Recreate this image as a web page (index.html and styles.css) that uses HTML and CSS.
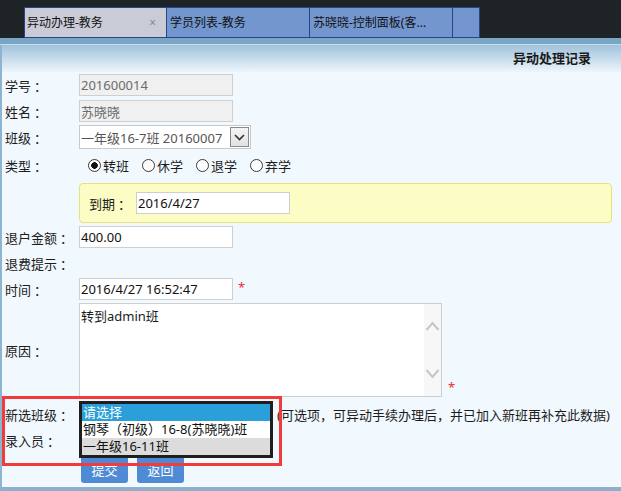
FILE: index.html
```html
<!DOCTYPE html>
<html lang="zh-CN">
<head>
<meta charset="utf-8">
<title>异动处理记录</title>
<link rel="stylesheet" href="styles.css">
</head>
<body>
<div class="topbar">
  <div class="tabs">
    <div class="tab tab-active"><span>异动办理-教务</span><span class="close">×</span></div>
    <div class="tab">学员列表-教务</div>
    <div class="tab">苏晓晓-控制面板(客...</div>
    <div class="tab tab-empty"></div>
  </div>
</div>
<div class="strip"></div>
<div class="panel">
  <div class="header"><h1>异动处理记录</h1></div>
  <form class="form">
    <div class="row r-input r1">
      <span class="label">学号<span class="c">：</span></span>
      <input class="field disabled" type="text" value="201600014" disabled>
    </div>
    <div class="row r-input r2">
      <span class="label">姓名<span class="c">：</span></span>
      <input class="field disabled" type="text" value="苏晓晓" disabled>
    </div>
    <div class="row r3">
      <span class="label">班级<span class="c">：</span></span>
      <div class="select">
        <span class="select-text">一年级16-7班 20160007</span>
        <span class="select-arrow"><svg width="11" height="7" viewBox="0 0 11 7"><polyline points="1,1 5.5,5.5 10,1" fill="none" stroke="#333" stroke-width="1.6"/></svg></span>
      </div>
    </div>
    <div class="row r4">
      <span class="label">类型<span class="c">：</span></span>
      <div class="radios">
        <label class="radio-item"><input class="radio" type="radio" name="t" checked>转班</label>
        <label class="radio-item"><input class="radio" type="radio" name="t">休学</label>
        <label class="radio-item"><input class="radio" type="radio" name="t">退学</label>
        <label class="radio-item"><input class="radio" type="radio" name="t">弃学</label>
      </div>
    </div>
    <div class="notice">
      <div class="row notice-row">
        <span class="notice-label">到期<span class="c">：</span></span>
        <input class="field" type="text" value="2016/4/27">
      </div>
    </div>
    <div class="row r-input r5">
      <span class="label">退户金额<span class="c">：</span></span>
      <input class="field" type="text" value="400.00">
    </div>
    <div class="row r6">
      <span class="label">退费提示<span class="c">：</span></span>
    </div>
    <div class="row r-input r7">
      <span class="label">时间<span class="c">：</span></span>
      <input class="field" type="text" value="2016/4/27 16:52:47">
      <span class="star">*</span>
    </div>
    <div class="row r8">
      <span class="label">原因<span class="c">：</span></span>
      <div class="textarea">
        <div class="textarea-text">转到admin班</div>
        <div class="scrollbar">
          <svg width="17" height="92" viewBox="0 0 17 92">
            <polyline points="2.5,26 8.5,19 14.5,26" fill="none" stroke="#c6c6c6" stroke-width="2"/>
            <polyline points="2.5,66 8.5,73 14.5,66" fill="none" stroke="#c6c6c6" stroke-width="2"/>
          </svg>
        </div>
      </div>
      <span class="star star-bottom">*</span>
    </div>
    <div class="row r9">
      <span class="label">新选班级<span class="c">：</span></span>
      <div class="listwrap">
        <div class="listbox">
          <div class="opt opt-selected">请选择</div>
          <div class="opt">钢琴（初级）16-8(苏晓晓)班</div>
          <div class="opt opt-hover">一年级16-11班</div>
        </div>
      </div>
      <span class="note">(可选项，可异动手续办理后，并已加入新班再补充此数据)</span>
    </div>
    <div class="row r10">
      <span class="label">录入员<span class="c">：</span></span>
    </div>
    <div class="buttons">
      <button class="btn" type="button">提交</button>
      <button class="btn" type="button">返回</button>
    </div>
    <div class="annot"></div>
  </form>
</div>
</body>
</html>
```
FILE: styles.css
```css
html, body {
  margin: 0;
  padding: 0;
}
body {
  width: 621px;
  height: 491px;
  overflow: hidden;
  font-family: "Noto Sans", "Noto Sans CJK SC", sans-serif;
  font-size: 13px;
  color: #1c1c1c;
  background: #f1f8fe;
}
.c {
  margin-left: 3px;
}
.topbar {
  height: 38px;
  box-sizing: border-box;
  padding: 7px 0 0 24px;
  background: #1e2326;
}
.tabs {
  display: flex;
  height: 31px;
}
.tab {
  width: 143px;
  box-sizing: border-box;
  border: 1px solid #2b438a;
  border-left: none;
  background: #7396cf;
  color: #111;
  font-size: 12px;
  line-height: 29px;
  padding-left: 3px;
  white-space: nowrap;
  overflow: hidden;
}
.tab-active {
  border-left: 1px solid #2b438a;
  background: #c9ccd7;
  padding-left: 2px;
  padding-right: 10px;
  display: flex;
  justify-content: space-between;
}
.close {
  color: #8a8a8a;
  font-size: 12px;
}
.tab-empty {
  width: 27px;
}
.strip {
  height: 6px;
  background: #78a6c4;
  border-bottom: 1px solid #c6dcec;
}
.panel {
  height: 446px;
  box-sizing: border-box;
  border-left: 2px solid #8db4d0;
  border-bottom: 4px solid #8fb0ca;
  display: flex;
  flex-direction: column;
}
.header {
  height: 27px;
  flex: none;
  background: linear-gradient(#a0c2dc, #edf5fb);
}
.header h1 {
  margin: 0;
  font-size: 13px;
  font-weight: bold;
  line-height: 27px;
  text-align: right;
  padding-right: 30px;
  color: #1a1a1a;
}
.form {
  position: relative;
  flex: 1;
  margin: 0;
  padding: 2px 0 0 3px;
}
.row {
  display: flex;
  align-items: center;
}
.label {
  width: 74px;
  flex: none;
  white-space: nowrap;
}
.r-input { height: 22px; }
.r1 { margin-bottom: 4px; }
.r2 { margin-bottom: 3px; }
.r3 { height: 24px; }
.r4 { height: 32px; }
.r5 { margin-top: 3px; }
.r6 { height: 30px; }
.r8 { margin-top: 3px; height: 94px; }
.r9 { height: 34px; }
.r10 { height: 18px; }

.field {
  width: 154px;
  height: 22px;
  box-sizing: border-box;
  margin: 0;
  border: 1px solid #cfcfcf;
  padding: 0 1px;
  font-family: inherit;
  font-size: 13px;
  color: #111;
  background: #fff;
  outline: none;
}
.field.disabled {
  background: #f0f0f0;
  color: #6b6b6b;
}
.select {
  width: 172px;
  height: 24px;
  box-sizing: border-box;
  border: 1px solid #c9c9c9;
  background: #fff;
  display: flex;
  align-items: center;
  padding-left: 1px;
}
.select-text {
  white-space: nowrap;
  overflow: hidden;
  color: #555;
}
.select-arrow {
  margin-left: auto;
  margin-right: 1px;
  flex: none;
  width: 19px;
  height: 20px;
  box-sizing: border-box;
  border: 1px solid #8a8a8a;
  background: linear-gradient(#f4f4f4, #e2e2e2);
  display: flex;
  align-items: center;
  justify-content: center;
}
.radios {
  display: flex;
  align-items: center;
  padding-left: 9px;
}
.radio-item {
  display: flex;
  align-items: center;
  margin-right: 13px;
}
.radio {
  appearance: none;
  -webkit-appearance: none;
  width: 13px;
  height: 13px;
  box-sizing: border-box;
  margin: 0 2px 0 0;
  border: 1px solid #3a3a3a;
  border-radius: 50%;
  background: #fff;
}
.radio:checked {
  background: radial-gradient(circle, #111 0, #111 3px, #fff 3.6px);
}
.notice {
  margin: 2px 0 0 74px;
  width: 533px;
  height: 40px;
  box-sizing: border-box;
  border: 1px solid #e6e27c;
  border-radius: 4px;
  background: #fcfdc4;
  padding: 8px 0 0 9px;
}
.notice-row {
  height: 22px;
}
.notice-label {
  width: 47px;
  flex: none;
  white-space: nowrap;
}
.star {
  color: #e83030;
  margin-left: 5px;
  align-self: flex-start;
  line-height: 18px;
}
.star-bottom {
  align-self: flex-end;
  margin-left: 6px;
  margin-bottom: 1px;
}
.textarea {
  width: 363px;
  height: 94px;
  box-sizing: border-box;
  border: 1px solid #cfcfcf;
  background: #fff;
  display: flex;
}
.textarea-text {
  flex: 1;
  padding: 2px 2px 0 1px;
  line-height: 20px;
}
.scrollbar {
  width: 17px;
  background: #f7f7f7;
}
.scrollbar svg {
  display: block;
}
.listwrap {
  position: relative;
  width: 194px;
  height: 22px;
  flex: none;
}
.listbox {
  position: absolute;
  left: 0;
  top: -2px;
  width: 194px;
  box-sizing: border-box;
  border: 3px solid #1f1f1f;
  background: #fff;
  z-index: 2;
}
.opt {
  height: 17px;
  line-height: 17px;
  padding-left: 1px;
  white-space: nowrap;
  overflow: hidden;
  color: #111;
}
.opt-selected {
  background: #2a9fd9;
  color: #fff;
}
.opt-hover {
  background: #dcdcdc;
}
.note {
  margin-left: 4px;
  white-space: nowrap;
  color: #1c1c1c;
}
.buttons {
  display: flex;
  gap: 9px;
  margin: 6px 0 0 76px;
}
.btn {
  width: 47px;
  height: 28px;
  border: none;
  border-radius: 3px;
  background: #4f8bd4;
  color: #fff;
  font-family: inherit;
  font-size: 13px;
  padding: 0;
}
.annot {
  position: absolute;
  left: 0;
  top: 324px;
  width: 280px;
  height: 70px;
  box-sizing: border-box;
  border: 3px solid #f23c3c;
  z-index: 3;
}
```
